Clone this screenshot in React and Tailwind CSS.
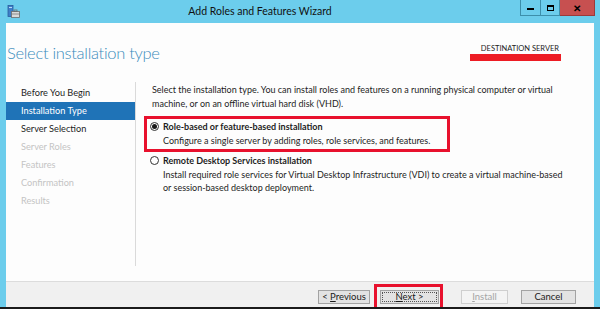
import { useState } from "react";

const NAV = [
  { label: "Before You Begin", state: "done" },
  { label: "Installation Type", state: "active" },
  { label: "Server Selection", state: "done" },
  { label: "Server Roles", state: "off" },
  { label: "Features", state: "off" },
  { label: "Confirmation", state: "off" },
  { label: "Results", state: "off" },
];

function WizardIcon() {
  return (
    <svg width="13" height="14" viewBox="0 0 13 14">
      <rect x="1" y="0.5" width="5" height="11" fill="#3f7fc9" stroke="#2a5e9e" strokeWidth="0.8" />
      <rect x="2" y="2" width="3" height="1" fill="#bcd8f5" />
      <rect x="4.5" y="6.5" width="8" height="6" fill="#d9d9d9" stroke="#6d6d6d" strokeWidth="0.8" />
      <rect x="7" y="5" width="3" height="1.6" fill="none" stroke="#6d6d6d" strokeWidth="0.8" />
      <line x1="4.5" y1="9" x2="12.5" y2="9" stroke="#6d6d6d" strokeWidth="0.7" />
    </svg>
  );
}

function Radio({ checked }) {
  return (
    <span className="w-[9px] h-[9px] rounded-full border border-[#333] bg-white flex items-center justify-center shrink-0">
      {checked && <span className="w-[5px] h-[5px] rounded-full bg-[#1a1a1a]" />}
    </span>
  );
}

function Btn({ children, disabled, focused }) {
  return (
    <button
      type="button"
      className={
        "h-[14px] border text-[9.5px] leading-none flex items-center justify-center " +
        (disabled ? "border-[#cfcfcf] bg-[#f4f4f4] text-[#a5a5a5]" : "border-[#a3a3a3] bg-[#e3e3e3] text-[#1a1a1a]")
      }
      disabled={disabled}
    >
      {focused ? (
        <span className="m-[1px] self-stretch flex-1 border border-dotted border-[#555] flex items-center justify-center">
          {children}
        </span>
      ) : (
        children
      )}
    </button>
  );
}

export default function App() {
  const [choice, setChoice] = useState("role");

  return (
    <div
      className="w-[600px] h-[309px] bg-[#6ccdec] flex flex-col overflow-hidden text-[#1e1e1e]"
      style={{ fontFamily: 'Lato, "Open Sans", sans-serif' }}
    >
      {/* title bar */}
      <div className="h-[23px] flex items-start shrink-0">
        <div className="pl-[7px] pt-[5px]">
          <WizardIcon />
        </div>
        <div className="flex-1 text-center text-[10.5px] leading-[23px] text-[#111] pr-[20px]">
          Add Roles and Features Wizard
        </div>
        <div className="flex mr-[5px]">
          <div className="w-[21px] h-[16px] border border-[#3d8fab] border-t-0 flex items-center justify-center">
            <span className="w-[7px] h-[2px] bg-black mt-[3px]" />
          </div>
          <div className="w-[19px] h-[16px] border border-[#3d8fab] border-t-0 border-l-0 flex items-center justify-center">
            <span className="w-[7px] h-[6px] border border-black border-t-2" />
          </div>
          <div className="w-[35px] h-[16px] bg-[#c75050] border border-[#9b3a3a] border-t-0 border-l-0 flex items-center justify-center text-black text-[10px] font-bold leading-none">
            ✕
          </div>
        </div>
      </div>

      {/* window body */}
      <div className="flex-1 flex flex-col mx-[6px] mb-[2px] bg-[#fdfdfd] min-h-0">
        {/* header */}
        <div className="h-[57px] flex items-start justify-between shrink-0">
          <h1 className="text-[16.5px] font-light text-[#3a8cbc] pl-[1px] pt-[18px] leading-[24px] tracking-[-0.3px]">
            Select installation type
          </h1>
          <div className="pr-[33px] pt-[21px] flex flex-col items-end">
            <span className="text-[7.5px] leading-[10px] text-[#222] pr-[2px]">DESTINATION SERVER</span>
            <span className="w-[91px] h-[7px] bg-[#ed1c24]" />
          </div>
        </div>

        {/* main */}
        <div className="flex-1 flex min-h-0">
          <div className="w-[130px] border-r border-[#dadada] mt-[2px] mb-[15px] pt-[2px] shrink-0">
            {NAV.map((n) => (
              <div
                key={n.label}
                className={
                  "h-[18px] pl-[15px] text-[9.2px] leading-[18px] " +
                  (n.state === "active"
                    ? "bg-[#1f73b7] text-white"
                    : n.state === "done"
                    ? "text-[#1e1e1e]"
                    : "text-[#c4c4c4]")
                }
              >
                {n.label}
              </div>
            ))}
          </div>

          <div className="flex-1 pl-[8px] pt-[3px] text-[9px] leading-[13.5px]">
            <p className="pl-[8px] pr-[10px]">
              Select the installation type. You can install roles and features on a running physical computer or virtual
              machine, or on an offline virtual hard disk (VHD).
            </p>

            <div className="mt-[6px] w-[306px] border-[3px] border-[#e8112d] pl-[3px] pt-[1px] pb-[2px]">
              <label className="flex items-center gap-[2px] font-bold" onClick={() => setChoice("role")}>
                <Radio checked={choice === "role"} />
                <span className="pl-[2px]">Role-based or feature-based installation</span>
              </label>
              <p className="pl-[13px]">Configure a single server by adding roles, role services, and features.</p>
            </div>

            <div className="pl-[6px] pt-[2px]">
              <label className="flex items-center gap-[2px] font-bold" onClick={() => setChoice("rds")}>
                <Radio checked={choice === "rds"} />
                <span className="pl-[2px]">Remote Desktop Services installation</span>
              </label>
              <p className="pl-[13px] pr-[24px]">
                Install required role services for Virtual Desktop Infrastructure (VDI) to create a virtual machine-based
                or session-based desktop deployment.
              </p>
            </div>
          </div>
        </div>

        {/* footer */}
        <div className="h-[26px] shrink-0 bg-[#f0f0f0] border-t border-[#dcdcdc] flex items-start pt-[8px] pl-[312px]">
          <Btn>
            <span className="w-[50px]">
              &lt; <u>P</u>revious
            </span>
          </Btn>
          <div className="ml-[4px] -mt-[6px] border-[3px] border-[#e8112d] p-[3px] flex">
            <div className="w-[57px] flex">
              <Btn focused>
                <span className="w-[53px]">
                  <u>N</u>ext &gt;
                </span>
              </Btn>
            </div>
          </div>
          <div className="ml-[18px]">
            <Btn disabled>
              <span className="w-[45px]">
                <u>I</u>nstall
              </span>
            </Btn>
          </div>
          <div className="ml-[13px]">
            <Btn>
              <span className="w-[53px]">Cancel</span>
            </Btn>
          </div>
        </div>
      </div>
      <div className="h-[2px] bg-[#1b1b1b] shrink-0 -mt-[2px]" />
    </div>
  );
}
